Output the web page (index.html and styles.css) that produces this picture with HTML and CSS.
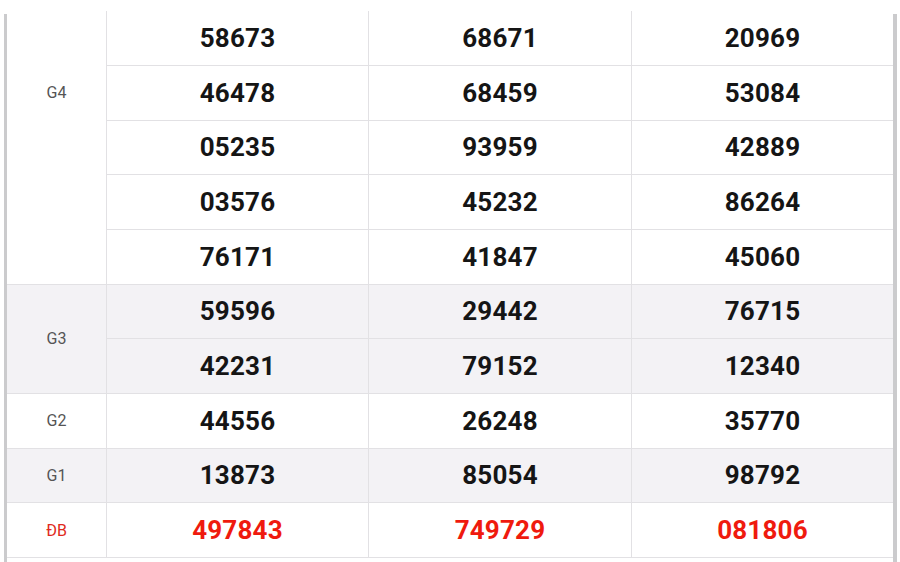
FILE: index.html
```html
<!DOCTYPE html>
<html lang="vi">
<head>
<meta charset="utf-8">
<title>Kết quả xổ số</title>
<link rel="stylesheet" href="styles.css">
</head>
<body>
<div class="top-fade"></div>
<div class="frame">
  <table class="results">
    <colgroup>
      <col class="c-label">
      <col class="c-1">
      <col class="c-2">
      <col class="c-3">
    </colgroup>
    <tbody>
      <tr>
        <td class="label" rowspan="7">G4</td>
        <td class="num"></td><td class="num"></td><td class="num"></td>
      </tr>
      <tr><td class="num"></td><td class="num"></td><td class="num"></td></tr>
      <tr><td class="num">58673</td><td class="num">68671</td><td class="num">20969</td></tr>
      <tr><td class="num">46478</td><td class="num">68459</td><td class="num">53084</td></tr>
      <tr><td class="num">05235</td><td class="num">93959</td><td class="num">42889</td></tr>
      <tr><td class="num">03576</td><td class="num">45232</td><td class="num">86264</td></tr>
      <tr><td class="num">76171</td><td class="num">41847</td><td class="num">45060</td></tr>
      <tr class="shade">
        <td class="label" rowspan="2">G3</td>
        <td class="num">59596</td><td class="num">29442</td><td class="num">76715</td>
      </tr>
      <tr class="shade"><td class="num">42231</td><td class="num">79152</td><td class="num">12340</td></tr>
      <tr>
        <td class="label">G2</td>
        <td class="num">44556</td><td class="num">26248</td><td class="num">35770</td>
      </tr>
      <tr class="shade">
        <td class="label">G1</td>
        <td class="num">13873</td><td class="num">85054</td><td class="num">98792</td>
      </tr>
      <tr class="special">
        <td class="label">ĐB</td>
        <td class="num">497843</td><td class="num">749729</td><td class="num">081806</td>
      </tr>
    </tbody>
  </table>
</div>
</body>
</html>
```
FILE: styles.css
```css
html, body {
  margin: 0;
  padding: 0;
  background: #ffffff;
  overflow: hidden;
}

body {
  width: 900px;
  height: 562px;
  font-family: Roboto, "Liberation Sans", Arial, sans-serif;
}

.top-fade {
  position: absolute;
  top: 0;
  left: 0;
  width: 900px;
  height: 11px;
  background: #ffffff;
  z-index: 2;
}

.frame {
  display: flow-root;
  margin-top: 14px;
  margin-left: 4px;
  width: 886px;
  height: 548px;
  border-left: 3px solid #cbcbcd;
  border-right: 4px solid #cbcbcd;
}

.results {
  margin-top: -112px;
  width: 886px;
  table-layout: fixed;
  border-collapse: separate;
  border-spacing: 0;
}

.c-label { width: 100px; }
.c-1 { width: 261px; }
.c-2 { width: 263px; }
.c-3 { width: 262px; }

.results tr {
  height: 54.67px;
}

.results td {
  padding: 0;
  text-align: center;
  vertical-align: middle;
  border-bottom: 1px solid #e2e1e4;
  box-sizing: border-box;
}

.results td.label {
  border-right: 1px solid #e2e1e4;
  font-size: 16px;
  color: #555555;
  font-weight: 400;
}

.results td.num {
  font-size: 26px;
  font-weight: 700;
  color: #151515;
  letter-spacing: 0.2px;
}

.results td.num + td.num {
  border-left: 1px solid #e2e1e4;
}

.results tr.shade td {
  background: #f3f2f5;
}

.results tr.special td.label {
  color: #e02a20;
}

.results tr.special td.num {
  color: #ef1a0e;
}
```
